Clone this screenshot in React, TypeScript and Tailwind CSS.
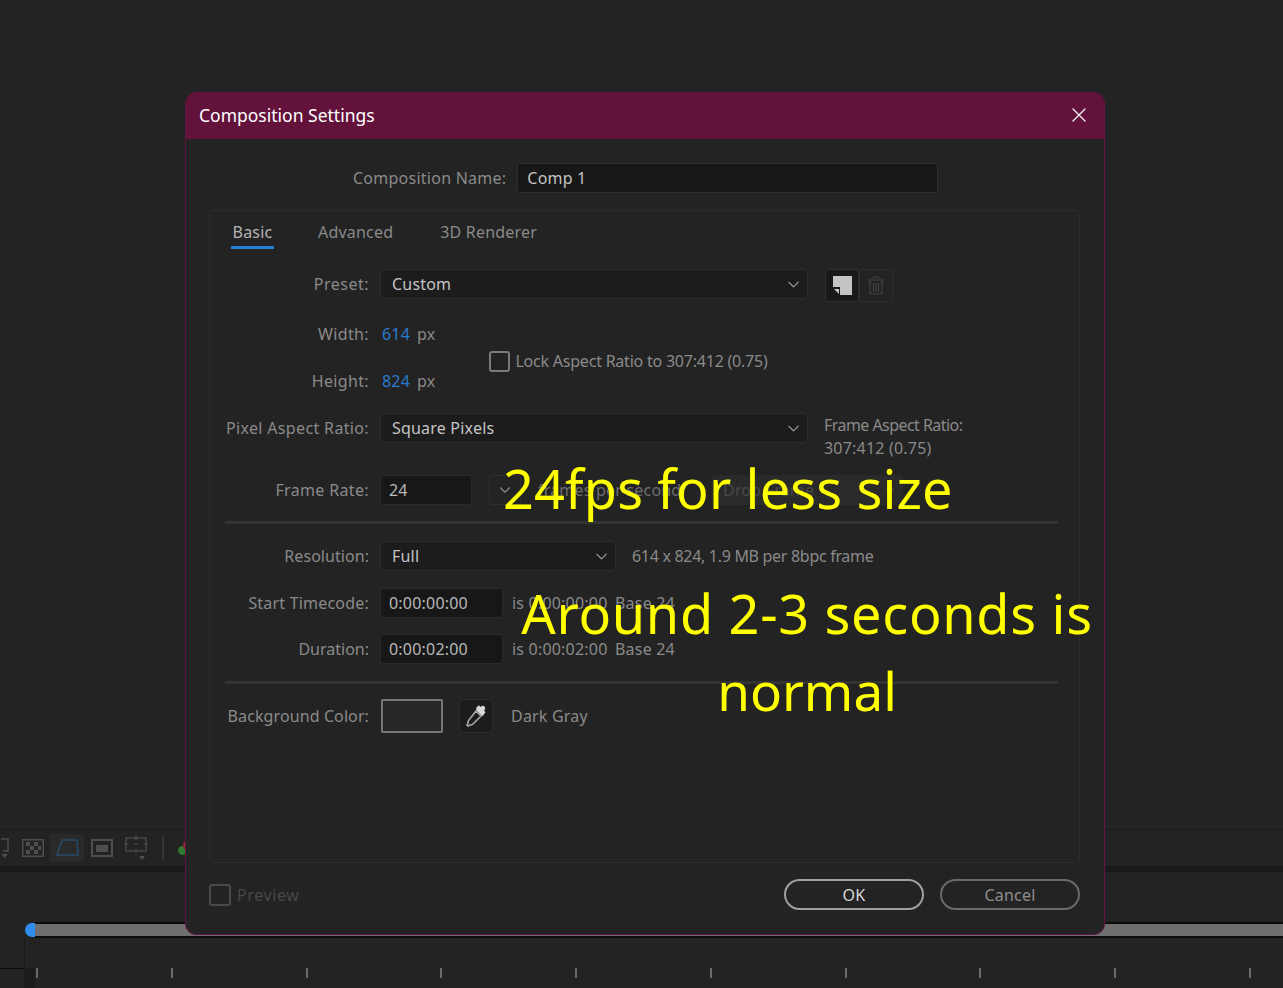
import { ChevronDown, X } from "lucide-react";
import type { ReactNode } from "react";

const ticks = [0, 1, 2, 3, 4, 5, 6, 7, 8, 9];

function Label({ children, spacing = "tracking-[0.35px]" }: { children: ReactNode; spacing?: string }) {
  return <span className={`w-[159px] shrink-0 text-right text-[#8a8a8a] ${spacing}`}>{children}</span>;
}

function Select({ value, width }: { value: string; width: string }) {
  return (
    <div className={`flex h-[30px] items-center justify-between rounded-[3px] border border-[#2e2e2e] bg-[#1c1c1c] pl-[11px] pr-[4px] text-[#c4c4c4] ${width}`}>
      <span>{value}</span>
      <ChevronDown size={19} strokeWidth={1.5} className="text-[#a0a0a0]" />
    </div>
  );
}

function Field({ value, width }: { value: string; width: string }) {
  return (
    <div className={`flex h-[30px] items-center rounded-[3px] border border-[#2a2a2a] bg-[#171717] pl-2 text-[#b8b8b8] ${width}`}>
      {value}
    </div>
  );
}

function Timeline() {
  return (
    <div className="flex min-h-[988px] flex-col overflow-hidden bg-[#232323]">
      <div className="h-[829px] shrink-0" />
      <div className="flex h-[37px] shrink-0 items-center border-t border-[#1a1a1a] pl-[22px]">
        <svg width="22" height="24" viewBox="0 0 22 24" className="-ml-[34px] mr-[12px] text-[#4e4e4e]" fill="none" stroke="currentColor" strokeWidth="1.5">
          <path d="M13 3h7v12h-5" />
          <path d="M13 18h7l-3.5 4z" fill="currentColor" stroke="none" />
        </svg>
        <svg width="22" height="18" viewBox="0 0 22 18" className="text-[#4e4e4e]">
          <rect x="0.75" y="0.75" width="20.5" height="16.5" fill="none" stroke="currentColor" strokeWidth="1.5" />
          <path d="M4 3h4v4H4zM12 3h4v4h-4zM8 7h4v4H8zM16 7h3v4h-3zM4 11h4v4H4zM12 11h4v4h-4z" fill="currentColor" />
        </svg>
        <div className="ml-[6px] flex h-[28px] w-[34px] items-center justify-center rounded-[3px] bg-[#2a2a2a]">
          <svg width="24" height="20" viewBox="0 0 24 20" fill="none" stroke="#2b4a6b" strokeWidth="1.5">
            <path d="M7 2h15l1 15H2z" />
          </svg>
        </div>
        <div className="ml-[7px] flex h-[18px] w-[22px] items-center justify-center border-2 border-[#4e4e4e]">
          <div className="h-[7px] w-[12px] bg-[#4e4e4e]" />
        </div>
        <svg width="24" height="26" viewBox="0 0 24 26" className="ml-[11px] text-[#4e4e4e]" fill="none" stroke="currentColor" strokeWidth="1.2">
          <rect x="2" y="3" width="20" height="13" />
          <path d="M12 0v5M12 14v4M0 9h4M20 9h4M10 9h4" />
          <path d="M15 21h6l-3 4z" fill="currentColor" stroke="none" />
        </svg>
        <div className="ml-[14px] h-[24px] w-[2px] bg-[#363636]" />
        <div className="relative ml-[14px] h-[14px] w-[10px]">
          <div className="absolute left-0 top-[5px] h-[9px] w-[9px] rounded-full bg-[#2f7a2f]" />
          <div className="absolute left-[5px] top-0 h-[9px] w-[9px] rounded-full bg-[#8a2a2a]" />
        </div>
      </div>
      <div className="h-[6px] shrink-0 bg-[#191919]" />
      <div className="h-[50px] shrink-0" />
      <div className="flex h-[16px] shrink-0 pl-[25px]">
        <div className="my-[1px] w-[10px] rounded-l-[8px] bg-[#2f8df0]" />
        <div className="flex-1 border-y-2 border-[#0c0c0c] bg-[#6f6f6f]" />
      </div>
      <div className="flex flex-1">
        <div className="flex w-[25px] shrink-0 flex-col border-r border-[#191919]">
          <div className="h-[30px]" />
          <div className="h-[1px] bg-[#0c0c0c]" />
        </div>
        <div className="flex w-[10px] shrink-0 flex-col">
          <div className="h-[30px]" />
          <div className="flex-1 bg-[#1c1c1c]" />
        </div>
        <div className="flex flex-1 pl-[1px] pr-[32px] pt-[30px]">
          <div className="flex h-[10px] w-full justify-between">
            {ticks.map((t) => (
              <div key={t} className="h-[10px] w-[2px] bg-[#6a6a6a]" />
            ))}
          </div>
        </div>
      </div>
    </div>
  );
}

function Dialog() {
  return (
    <div className="absolute left-[185px] top-[92px] flex h-[843px] w-[920px] flex-col overflow-hidden rounded-[11px] border border-[#641240] bg-[#232323] text-[16px] leading-[22px] tracking-[0.2px] [font-family:'Noto_Sans',sans-serif]">
      <div className="flex h-[46px] shrink-0 items-start justify-between bg-[#63123c] pl-[13px] pr-[13px] pt-[11px] text-[17.5px] tracking-normal text-white">
        <span>Composition Settings</span>
        <X size={24} strokeWidth={1.4} className="-mt-[1px] text-[#eeeeee]" />
      </div>

      <div className="flex shrink-0 items-center pl-[167px] pt-[24px]">
        <span className="tracking-[0.25px] text-[#8a8a8a]">Composition Name:</span>
        <div className="ml-[11px] flex h-[30px] w-[421px] items-center rounded-[3px] border border-[#2e2e2e] bg-[#171717] pl-[9px] text-[#c4c4c4]">
          Comp 1
        </div>
      </div>

      <div className="ml-[23px] mt-[17px] flex h-[653px] w-[871px] shrink-0 flex-col rounded-[3px] border border-[#2c2c2c]">
        <div className="flex h-[38px] shrink-0 items-end pl-[21px]">
          <div className="flex h-[28px] w-[43px] justify-center border-b-[3px] border-[#2680d8] text-[#b4b4b4]">Basic</div>
          <div className="ml-[44px] h-[28px] text-[#8a8a8a]">Advanced</div>
          <div className="ml-[47px] h-[28px] text-[#8a8a8a]">3D Renderer</div>
        </div>

        <div className="mt-[20px] flex items-start">
          <div className="flex h-[30px] items-center">
            <Label spacing="tracking-[0.5px]">Preset:</Label>
            <div className="ml-[11px]">
              <Select value="Custom" width="w-[428px]" />
            </div>
          </div>
          <div className="ml-[17px] flex h-[33px] w-[34px] items-center justify-center rounded-[3px] border border-[#2e2e2e] bg-[#191919]">
            <svg width="19" height="19" viewBox="0 0 19 19">
              <path d="M0 0h19v19H7v-8H0z" fill="#c4c4c4" />
              <path d="M1 13h5v5z" fill="#c4c4c4" />
            </svg>
          </div>
          <div className="flex h-[33px] w-[34px] items-center justify-center rounded-[3px] border border-[#2e2e2e]">
            <svg width="16" height="19" viewBox="0 0 16 19" fill="none" stroke="#444444" strokeWidth="1.2">
              <path d="M0 4h16M5 3c0-3 6-3 6 0M2 4v14h12V4M5.5 7v9M8 7v9M10.5 7v9" />
            </svg>
          </div>
        </div>

        <div className="flex">
          <div className="flex flex-col">
            <div className="mt-[17px] flex h-[30px] items-center">
              <Label>Width:</Label>
              <span className="ml-[13px] text-[#2b7bd0]">614</span>
              <span className="ml-[7px] text-[#8a8a8a]">px</span>
            </div>
            <div className="mt-[17px] flex h-[30px] items-center">
              <Label>Height:</Label>
              <span className="ml-[13px] text-[#2b7bd0]">824</span>
              <span className="ml-[7px] text-[#8a8a8a]">px</span>
            </div>
          </div>
          <div className="ml-[54px] mt-[47px] flex h-[24px] items-center">
            <div className="h-[21px] w-[21px] rounded-[3px] border-2 border-[#7a7a7a]" />
            <span className="ml-[5px] tracking-[-0.22px] text-[#8a8a8a]">Lock Aspect Ratio to 307:412 (0.75)</span>
          </div>
        </div>

        <div className="mt-[17px] flex items-start">
          <div className="flex h-[30px] items-center">
            <Label>Pixel Aspect Ratio:</Label>
            <div className="ml-[11px]">
              <Select value="Square Pixels" width="w-[428px]" />
            </div>
          </div>
          <div className="ml-[16px] mt-[1px] flex flex-col text-[#8a8a8a] leading-[23px]">
            <span className="tracking-[-0.55px]">Frame Aspect Ratio:</span>
            <span>307:412 (0.75)</span>
          </div>
        </div>

        <div className="mt-[15px] flex items-center">
          <Label>Frame Rate:</Label>
          <div className="ml-[11px]">
            <Field value="24" width="w-[92px]" />
          </div>
          <div className="ml-[17px] flex h-[30px] w-[32px] items-center justify-center rounded-[3px] border border-[#2e2e2e]">
            <ChevronDown size={18} strokeWidth={1.5} className="text-[#8a8a8a]" />
          </div>
          <span className="ml-[17px] w-[174px] text-[#6e6e6e]">frames per second</span>
          <div className="flex h-[30px] w-[191px] items-center justify-between rounded-[3px] bg-[#2a2a2a] pl-[11px] pr-[5px] text-[#484848]">
            <span>Drop Frame</span>
            <ChevronDown size={16} strokeWidth={1.5} />
          </div>
        </div>

        <div className="ml-[15px] mt-[16px] h-[3px] w-[833px] bg-[#333333]" />

        <div className="mt-[17px] flex items-center">
          <Label spacing="tracking-[0.05px]">Resolution:</Label>
          <div className="ml-[11px]">
            <Select value="Full" width="w-[236px]" />
          </div>
          <span className="ml-[16px] tracking-[-0.3px] text-[#8a8a8a]">614 x 824, 1.9 MB per 8bpc frame</span>
        </div>

        <div className="mt-[17px] flex items-center">
          <Label spacing="tracking-[0.2px]">Start Timecode:</Label>
          <div className="ml-[11px]">
            <Field value="0:00:00:00" width="w-[123px]" />
          </div>
          <span className="ml-[9px] w-[103px] text-[#8a8a8a]">is 0:00:00:00</span>
          <span className="text-[#8a8a8a]">Base 24</span>
        </div>

        <div className="mt-[16px] flex items-center">
          <Label spacing="tracking-[0px]">Duration:</Label>
          <div className="ml-[11px]">
            <Field value="0:00:02:00" width="w-[123px]" />
          </div>
          <span className="ml-[9px] w-[103px] text-[#8a8a8a]">is 0:00:02:00</span>
          <span className="text-[#8a8a8a]">Base 24</span>
        </div>

        <div className="ml-[15px] mt-[17px] h-[3px] w-[833px] bg-[#333333]" />

        <div className="mt-[15px] flex items-center">
          <Label spacing="tracking-[0.1px]">Background Color:</Label>
          <div className="ml-[12px] h-[34px] w-[62px] rounded-[2px] border-2 border-[#767676] bg-[#262626]" />
          <div className="ml-[16px] flex h-[34px] w-[34px] items-center justify-center rounded-[3px] border border-[#2e2e2e] bg-[#1c1c1c]">
            <svg width="24" height="24" viewBox="0 0 24 24">
              <path d="M13 4l7 7-2 1-6-6z" fill="#d8d8d8" />
              <path d="M14 2c1-1 2 0 2 1l2-1c2-1 4 2 3 3l-1 2c1 0 2 1 1 2l-2 2-7-7z" fill="#d8d8d8" />
              <path d="M12 7l5 5-8 8c-1 1-2 1-3 1l-2 1-1-1 1-2c0-1 0-2 1-3z" fill="none" stroke="#a8a8a8" strokeWidth="1.6" />
            </svg>
          </div>
          <span className="ml-[18px] text-[#8a8a8a]">Dark Gray</span>
        </div>
      </div>

      <div className="flex flex-1 items-center pb-[8px] pl-[23px] pr-[24px]">
        <div className="h-[22px] w-[22px] rounded-[3px] border-2 border-[#484848]" />
        <span className="ml-[6px] tracking-[0.6px] text-[#484848]">Preview</span>
        <div className="ml-auto flex h-[31px] w-[140px] items-center justify-center rounded-full border-2 border-[#a0a0a0] text-[#d8d8d8]">OK</div>
        <div className="ml-[16px] flex h-[31px] w-[140px] items-center justify-center rounded-full border-2 border-[#6a6a6a] text-[#8e8e8e]">Cancel</div>
      </div>
    </div>
  );
}

export default function App() {
  return (
    <div className="relative min-h-[988px] overflow-hidden">
      <Timeline />
      <Dialog />
      {/* captions added on top of the dialog */}
      <div className="absolute left-[503px] top-[450px] whitespace-nowrap text-[54px] leading-[76px] tracking-[0.15px] text-[#ffff00] [font-family:'Noto_Sans',sans-serif]">
        24fps for less size
      </div>
      <div className="absolute left-[521px] top-[575px] w-[572px] text-center text-[54px] leading-[77px] text-[#ffff00] [font-family:'Noto_Sans',sans-serif]">
        <div className="whitespace-nowrap tracking-[0.7px]">Around 2-3 seconds is</div>
        <div className="text-[53px]">normal</div>
      </div>
    </div>
  );
}
